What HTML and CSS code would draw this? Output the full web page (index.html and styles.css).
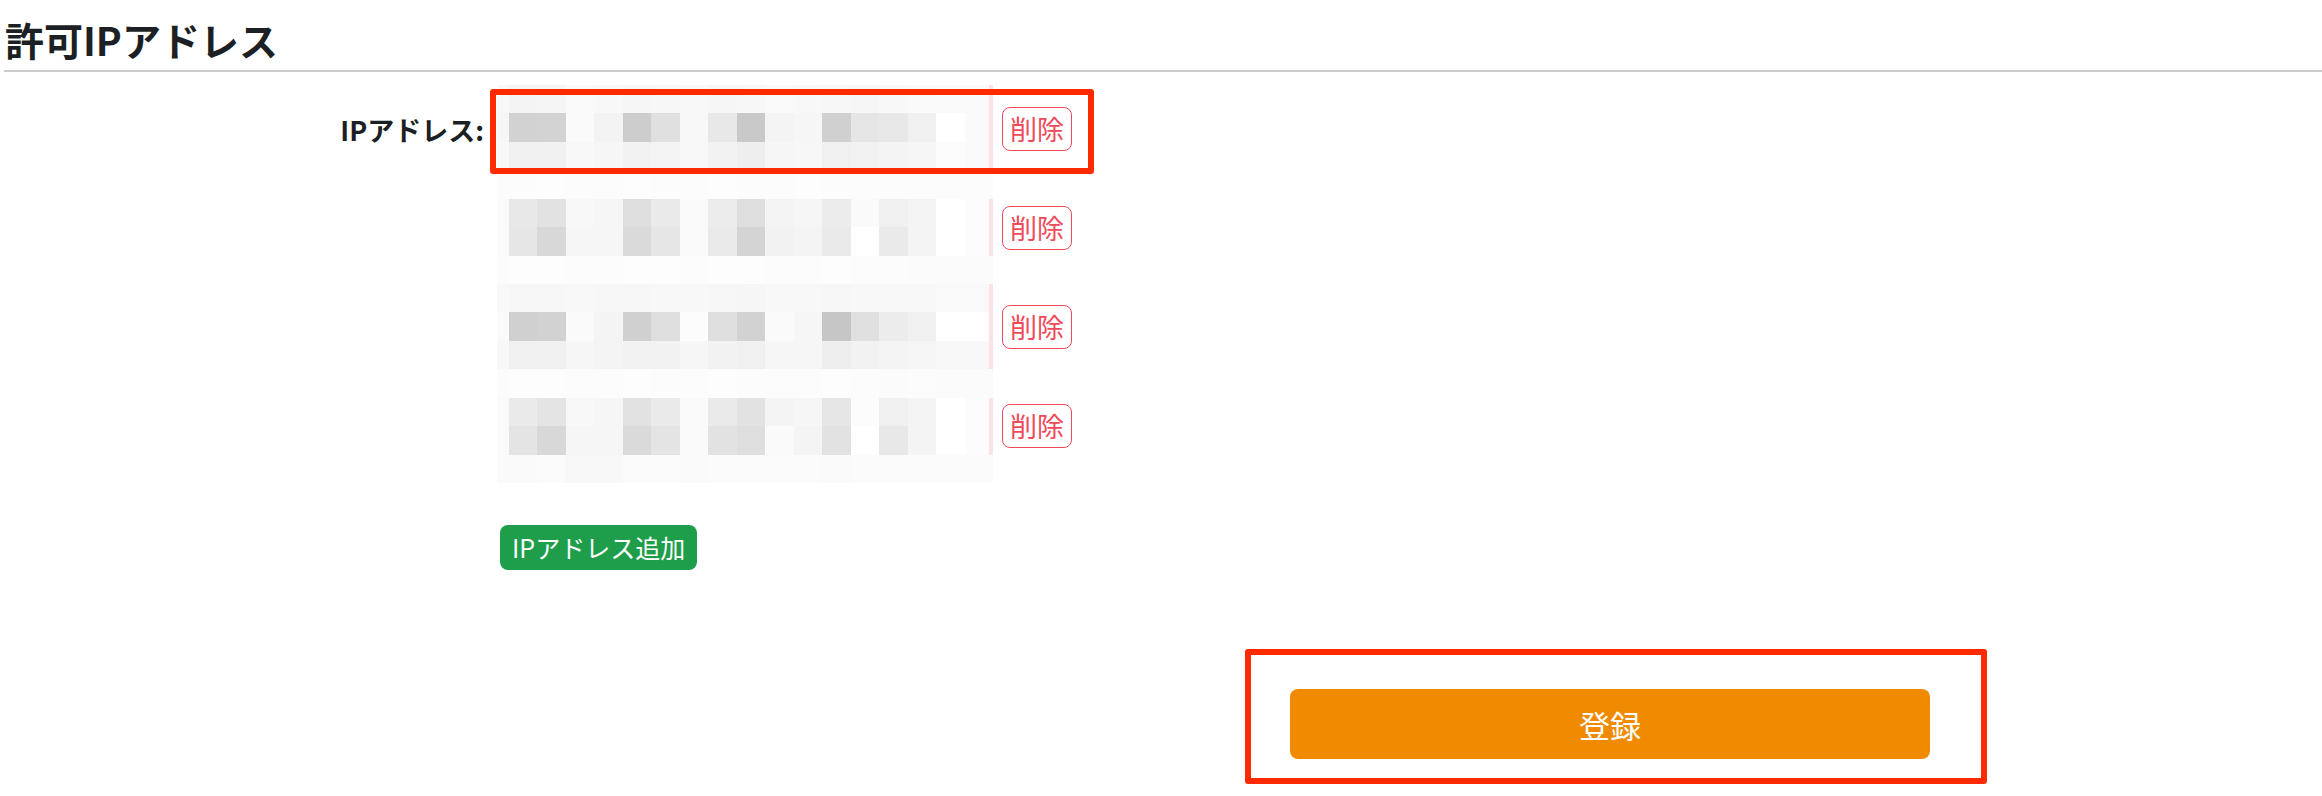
FILE: index.html
```html
<!DOCTYPE html>
<html lang="ja">

<head>
    <meta charset="UTF-8">
    <meta name="viewport" content="width=device-width, initial-scale=1.0">
    <title>許可IPアドレス</title>

    <link rel="stylesheet" href="styles.css">
</head>

<body>
    <div class="page">
        <h1 class="title">許可IPアドレス</h1>

        <form class="ip-form">
            <div class="form-row">
                <label class="form-label">IPアドレス:</label>

                <div class="form-field">
                    <div class="ip-list">
                        <div class="mosaic"></div>

                        <div class="delete-col">
                            <button type="button" class="btn-delete">削除</button>
                            <button type="button" class="btn-delete">削除</button>
                            <button type="button" class="btn-delete">削除</button>
                            <button type="button" class="btn-delete">削除</button>
                        </div>
                    </div>

                    <button type="button" class="btn-add">IPアドレス追加</button>
                </div>
            </div>

            <div class="submit-row">
                <button type="button" class="btn-submit">登録</button>
            </div>
        </form>

        <!-- markierungen aus dem screenshot -->
        <div class="mark mark-first"></div>
        <div class="mark mark-submit"></div>
    </div>

    <script>
        // grauwerte der verpixelten ip-adressen, eine zeile pro block-reihe
        const mosaik = [
            [248, 244, 245, 249, 248, 246, 247, 248, 246, 247, 249, 248, 247, 246, 248, 249, 250, 250],
            [246, 210, 211, 250, 243, 205, 224, 248, 232, 201, 244, 246, 208, 230, 232, 240, 255, 250],
            [248, 240, 241, 248, 246, 242, 244, 248, 242, 238, 246, 247, 240, 242, 244, 246, 252, 250],
            [252, 252, 253, 252, 252, 253, 252, 252, 253, 252, 252, 253, 252, 252, 252, 252, 252, 252],
            [250, 232, 226, 248, 246, 222, 234, 250, 236, 222, 244, 246, 236, 250, 240, 244, 255, 252],
            [250, 230, 216, 246, 246, 218, 230, 250, 234, 212, 242, 244, 234, 255, 234, 244, 255, 252],
            [252, 253, 253, 252, 252, 253, 253, 252, 253, 253, 252, 252, 253, 252, 252, 251, 251, 251],
            [249, 247, 247, 248, 247, 247, 248, 248, 247, 246, 248, 248, 247, 248, 248, 248, 249, 249],
            [250, 208, 210, 250, 244, 208, 222, 252, 222, 210, 250, 246, 198, 224, 236, 240, 255, 255],
            [248, 240, 240, 246, 244, 242, 242, 246, 242, 240, 246, 246, 238, 242, 244, 246, 248, 248],
            [252, 253, 253, 252, 252, 253, 252, 252, 253, 252, 252, 252, 253, 252, 251, 252, 251, 251],
            [250, 234, 228, 248, 246, 226, 234, 250, 234, 226, 244, 246, 230, 252, 240, 244, 255, 252],
            [250, 228, 216, 246, 246, 218, 228, 250, 226, 222, 250, 244, 226, 255, 232, 244, 255, 252],
            [250, 250, 251, 248, 248, 251, 251, 250, 251, 251, 251, 251, 250, 251, 251, 251, 251, 251]
        ];

        // reihen, an deren rechtem rand der rote knopf durchscheint
        const rosaReihen = [0, 1, 2, 4, 5, 7, 8, 9, 11, 12];

        const flaeche = document.querySelector(".mosaic");

        mosaik.forEach((reihe, r) => {
            reihe.forEach((grau, c) => {
                const zelle = document.createElement("span");
                zelle.style.backgroundColor = `rgb(${grau}, ${grau}, ${grau})`;
                if (c == reihe.length - 1 && rosaReihen.includes(r)) {
                    zelle.classList.add("rosa");
                }
                flaeche.appendChild(zelle);
            });
        });
    </script>
</body>

</html>
```

FILE: styles.css
```css
body {
    margin: 0;
    font-family: "Noto Sans CJK JP", "Noto Sans", sans-serif;
    color: #1c1f24;
    background-color: #ffffff;
}

.page {
    position: relative;
    padding-left: 4px;
    height: 796px;
}

.title {
    margin: 0;
    padding: 10px 0 2px 1px;
    font-size: 39px;
    font-weight: 700;
    line-height: 58px;
    border-bottom: 2px solid #cccccc;
}

.ip-form {
    padding-top: 13px;
}

.form-row {
    display: flex;
    gap: 13px;
}

.form-label {
    width: 480px;
    padding-top: 26px;
    text-align: right;
    font-size: 27px;
    font-weight: 700;
    line-height: 38px;
}

.ip-list {
    display: flex;
    gap: 9px;
}

.mosaic {
    display: grid;
    grid-template-columns: 12px repeat(17, 1fr);
    grid-template-rows: repeat(14, 1fr);
    width: 496px;
    height: 398px;
}

.mosaic .rosa {
    box-shadow: inset -4px 0 0 #fbe2e5;
}

.delete-col {
    display: flex;
    flex-direction: column;
    align-items: flex-start;
    gap: 55px;
    padding-top: 22px;
}

.btn-delete {
    padding: 3px 7px;
    border: 1.5px solid #ef4a5a;
    border-radius: 8px;
    background-color: #ffffff;
    color: #ef4a5a;
    font-family: inherit;
    font-size: 27px;
    line-height: 36px;
}

.btn-add {
    margin: 42px 0 0 3px;
    padding: 6px 12px;
    border: none;
    border-radius: 8px;
    background-color: #1e9e4a;
    color: #ffffff;
    font-family: inherit;
    font-size: 25px;
    line-height: 33px;
}

.submit-row {
    padding: 119px 0 0 1286px;
}

.btn-submit {
    width: 640px;
    height: 70px;
    border: none;
    border-radius: 8px;
    background-color: #f08a00;
    color: #ffffff;
    font-family: inherit;
    font-size: 31px;
}

.mark {
    position: absolute;
    box-sizing: border-box;
    border: 6px solid #ff2a00;
    border-radius: 3px;
}

.mark-first {
    left: 490px;
    top: 89px;
    width: 604px;
    height: 85px;
}

.mark-submit {
    left: 1245px;
    top: 649px;
    width: 742px;
    height: 135px;
}
```
